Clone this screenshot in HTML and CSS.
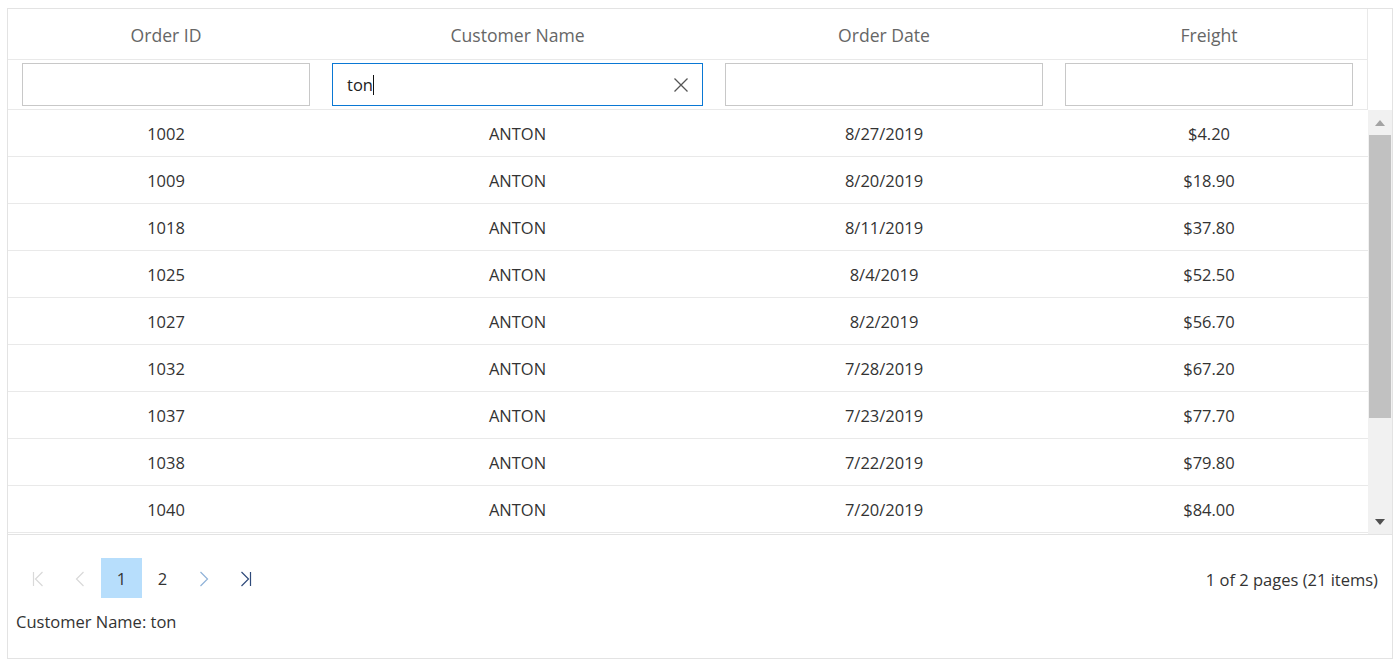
FILE: index.html
```html
<!DOCTYPE html>
<html>
<head>
<meta charset="utf-8">
<link rel="stylesheet" href="styles.css">
</head>
<body>
<div class="grid">
  <div class="head">
    <div class="head-inner">
      <div class="hrow">
        <div class="hcell">Order ID</div>
        <div class="hcell">Customer Name</div>
        <div class="hcell">Order Date</div>
        <div class="hcell">Freight</div>
      </div>
      <div class="frow">
        <div class="finput w1"></div>
        <div class="finput w2 focus">
          <span class="ftext">ton</span><span class="caret"></span>
          <svg class="clear" width="16" height="16" viewBox="0 0 16 16"><path d="M1.5 1.5 L14.5 14.5 M14.5 1.5 L1.5 14.5" stroke="#555" stroke-width="1.3" fill="none"/></svg>
        </div>
        <div class="finput w3"></div>
        <div class="finput w4"></div>
      </div>
    </div>
    <div class="gutter"></div>
  </div>
  <div class="body">
    <div class="rows">
      <div class="row"><div>1002</div><div>ANTON</div><div>8/27/2019</div><div>$4.20</div></div>
      <div class="row"><div>1009</div><div>ANTON</div><div>8/20/2019</div><div>$18.90</div></div>
      <div class="row"><div>1018</div><div>ANTON</div><div>8/11/2019</div><div>$37.80</div></div>
      <div class="row"><div>1025</div><div>ANTON</div><div>8/4/2019</div><div>$52.50</div></div>
      <div class="row"><div>1027</div><div>ANTON</div><div>8/2/2019</div><div>$56.70</div></div>
      <div class="row"><div>1032</div><div>ANTON</div><div>7/28/2019</div><div>$67.20</div></div>
      <div class="row"><div>1037</div><div>ANTON</div><div>7/23/2019</div><div>$77.70</div></div>
      <div class="row"><div>1038</div><div>ANTON</div><div>7/22/2019</div><div>$79.80</div></div>
      <div class="row"><div>1040</div><div>ANTON</div><div>7/20/2019</div><div>$84.00</div></div>
    </div>
    <div class="vscroll">
      <div class="sbtn"><span class="tri up"></span></div>
      <div class="thumb"></div>
      <div class="track"></div>
      <div class="sbtn"><span class="tri down"></span></div>
    </div>
  </div>
  <div class="pager">
    <div class="pager-top">
      <div class="nav">
        <span class="pbtn icon"><svg width="14" height="16" viewBox="0 0 14 16"><path d="M2.5 1 V15 M11.5 1 L4.5 8 L11.5 15" stroke="#d9d9d9" stroke-width="1.2" fill="none"/></svg></span>
        <span class="pbtn icon"><svg width="14" height="16" viewBox="0 0 14 16"><path d="M10.5 1 L3.5 8 L10.5 15" stroke="#d9d9d9" stroke-width="1.2" fill="none"/></svg></span>
        <span class="pbtn num active">1</span>
        <span class="pbtn num">2</span>
        <span class="pbtn icon"><svg width="14" height="16" viewBox="0 0 14 16"><path d="M3.5 1 L10.5 8 L3.5 15" stroke="#8fb2d8" stroke-width="1.2" fill="none"/></svg></span>
        <span class="pbtn icon"><svg width="14" height="16" viewBox="0 0 14 16"><path d="M2.5 1 L9.5 8 L2.5 15 M11.5 1 V15" stroke="#2f4a7a" stroke-width="1.2" fill="none"/></svg></span>
      </div>
      <div class="info">1 of 2 pages (21 items)</div>
    </div>
    <div class="status">Customer Name: ton</div>
  </div>
</div>
</body>
</html>
```
FILE: styles.css
```css
* { box-sizing: border-box; }
body {
  margin: 8px 0 0 7px;
  font-family: "Open Sans", "Noto Sans", sans-serif;
  font-size: 16.5px;
  color: #333;
  background: #fff;
}
.grid {
  width: 1386px;
  height: 651px;
  border: 1px solid #e3e3e3;
  display: flex;
  flex-direction: column;
}
.head { display: flex; }
.head-inner {
  width: 1360px;
  border-right: 1px solid #e9e9e9;
}
.gutter { width: 24px; }
.hrow, .row {
  display: grid;
  grid-template-columns: 316px 387px 346px 310px;
}
.hrow {
  height: 51px;
  border-bottom: 1px solid #e9e9e9;
}
.hcell {
  display: flex;
  align-items: center;
  justify-content: center;
  color: #666;
  font-size: 17.6px;
  padding-top: 2px;
}
.hcell:last-child, .row > div:last-child { padding-right: 6px; }
.frow {
  height: 50px;
  border-bottom: 1px solid #e9e9e9;
  display: flex;
  align-items: center;
  padding-left: 14px;
  gap: 22px;
}
.finput {
  height: 43px;
  border: 1px solid #c8c8c8;
  position: relative;
  display: flex;
  align-items: center;
  padding-left: 14px;
}
.w1 { width: 288px; }
.w2 { width: 371px; }
.w3 { width: 318px; }
.w4 { width: 288px; }
.finput.focus { border-color: #0a78d4; }
.ftext { font-size: 16.5px; color: #222; }
.caret {
  width: 1px;
  height: 20px;
  background: #111;
}
.clear {
  position: absolute;
  right: 13px;
  top: 13px;
}
.body {
  display: flex;
  height: 425px;
  border-bottom: 1px solid #e3e3e3;
}
.rows {
  width: 1360px;
  overflow: hidden;
}
.row {
  height: 47px;
  border-bottom: 1px solid #e9e9e9;
}
.row > div {
  display: flex;
  align-items: center;
  justify-content: center;
  font-size: 16.5px;
  color: #333;
}
.vscroll {
  width: 24px;
  background: #f1f1f1;
  display: flex;
  flex-direction: column;
}
.sbtn {
  height: 25px;
  display: flex;
  align-items: center;
  justify-content: center;
}
.tri {
  width: 0; height: 0;
  border-left: 5.5px solid transparent;
  border-right: 5.5px solid transparent;
}
.tri.up { border-bottom: 6px solid #a3a3a3; }
.tri.down { border-top: 6px solid #505050; }
.thumb {
  height: 283px;
  margin: 0 1px;
  background: #c1c1c1;
}
.track { flex: 1; }
.pager {
  flex: 1;
  padding: 23px 14px 0 8px;
}
.pager-top {
  display: flex;
  align-items: center;
  justify-content: space-between;
  height: 40px;
}
.nav {
  display: flex;
  padding-left: 1px;
  height: 40px;
}
.pbtn {
  height: 40px;
  display: flex;
  align-items: center;
  justify-content: center;
  font-size: 16.5px;
  color: #333;
  padding-top: 1px;
}
.pbtn.icon { width: 42px; }
.pbtn.num { width: 41px; }
.pbtn.active { background: #b7defc; }
.info { font-size: 16.5px; color: #333; padding-top: 3px; }
.status {
  margin-top: 13px;
  font-size: 16.5px;
  color: #333;
  line-height: 22px;
}
```
